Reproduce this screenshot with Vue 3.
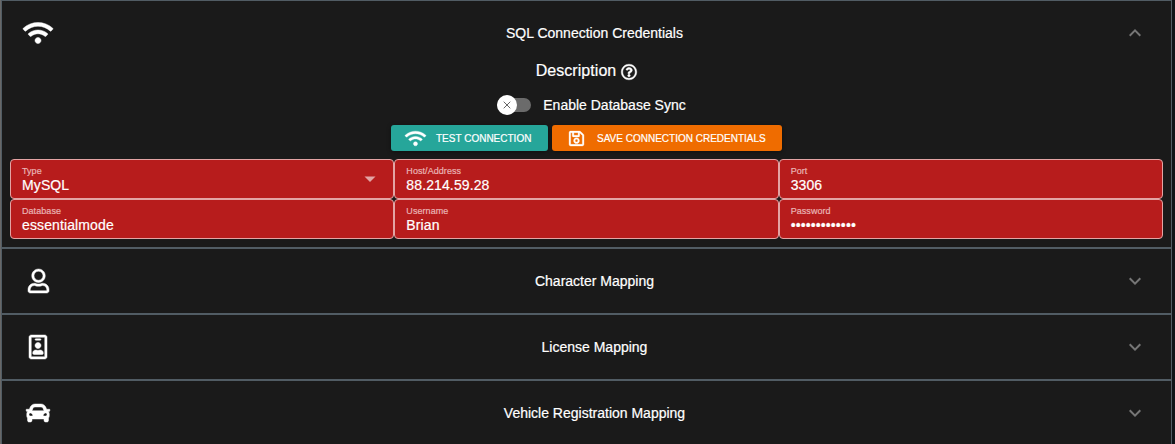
<script setup>
const wifi = {
  box: '0 0 640 512',
  d: 'M634.91 154.88C457.74-8.99 182.19-8.93 5.09 154.88c-6.66 6.16-6.79 16.59-.35 22.98l34.24 33.97c6.14 6.1 16.02 6.23 22.4.38 145.92-133.68 371.3-133.71 517.25 0 6.38 5.85 16.26 5.71 22.4-.38l34.24-33.97c6.43-6.39 6.3-16.82-.36-22.98zM320 352c-35.35 0-64 28.65-64 64s28.65 64 64 64 64-28.65 64-64-28.65-64-64-64zm202.67-83.59c-115.26-101.93-290.21-101.82-405.34 0-6.9 6.1-7.12 16.69-.57 23.15l34.44 33.99c6 5.92 15.66 6.32 22.05.8 83.95-72.57 209.74-72.41 293.49 0 6.39 5.52 16.05 5.13 22.05-.8l34.44-33.99c6.56-6.46 6.33-17.06-.56-23.15z',
}
const save =
  'M433.941 129.941l-83.882-83.882A48 48 0 0 0 316.118 32H48C21.49 32 0 53.49 0 80v352c0 26.51 21.49 48 48 48h352c26.51 0 48-21.49 48-48V163.882a48 48 0 0 0-14.059-33.941zM272 80v80H144V80h128zm122 352H54a6 6 0 0 1-6-6V86a6 6 0 0 1 6-6h42v104c0 13.255 10.745 24 24 24h176c13.255 0 24-10.745 24-24V83.882l78.243 78.243a6 6 0 0 1 1.757 4.243V426a6 6 0 0 1-6 6zM224 232c-48.523 0-88 39.477-88 88s39.477 88 88 88 88-39.477 88-88-39.477-88-88-88zm0 128c-22.056 0-40-17.944-40-40s17.944-40 40-40 40 17.944 40 40-17.944 40-40 40z'
const help =
  'M256 8C119.043 8 8 119.083 8 256c0 136.997 111.043 248 248 248s248-111.003 248-248C504 119.083 392.957 8 256 8zm0 448c-110.532 0-200-89.431-200-200 0-110.495 89.472-200 200-200 110.491 0 200 89.471 200 200 0 110.53-89.431 200-200 200zm107.244-255.2c0 67.052-72.421 68.084-72.421 92.863V300c0 6.627-5.373 12-12 12h-45.647c-6.627 0-12-5.373-12-12v-8.659c0-35.745 27.1-50.034 47.579-61.516 17.561-9.845 28.324-16.541 28.324-29.579 0-17.246-21.999-28.693-39.784-28.693-23.189 0-33.894 10.977-48.942 29.969-4.057 5.12-11.46 6.071-16.666 2.124l-27.824-21.098c-5.107-3.872-6.251-11.066-2.644-16.363C184.846 131.491 214.94 112 261.794 112c49.071 0 101.45 38.304 101.45 88.8zM298 368c0 23.159-18.841 42-42 42s-42-18.841-42-42 18.841-42 42-42 42 18.841 42 42z'
const chevron = 'M16.59 8.59L12 13.17 7.41 8.59 6 10l6 6 6-6z'

const fields = [
  { label: 'Type', value: 'MySQL', select: true },
  { label: 'Host/Address', value: '88.214.59.28' },
  { label: 'Port', value: '3306' },
  { label: 'Database', value: 'essentialmode' },
  { label: 'Username', value: 'Brian' },
  { label: 'Password', value: '•'.repeat(13), secret: true },
]

const sections = [
  {
    title: 'Character Mapping',
    box: '0 0 448 512',
    d: 'M313.6 304c-28.7 0-42.5 16-89.6 16-47.1 0-60.8-16-89.6-16C60.2 304 0 364.2 0 438.4V464c0 26.5 21.5 48 48 48h352c26.5 0 48-21.5 48-48v-25.6c0-74.2-60.2-134.4-134.4-134.4zM400 464H48v-25.6c0-47.6 38.8-86.4 86.4-86.4 14.6 0 38.3 16 89.6 16 51.7 0 74.9-16 89.6-16 47.6 0 86.4 38.8 86.4 86.4V464zM224 288c79.5 0 144-64.5 144-144S303.5 0 224 0 80 64.5 80 144s64.5 144 144 144zm0-240c52.9 0 96 43.1 96 96s-43.1 96-96 96-96-43.1-96-96 43.1-96 96-96z',
  },
  {
    title: 'License Mapping',
    box: '0 0 384 512',
    d: 'M336 0H48C21.5 0 0 21.5 0 48v416c0 26.5 21.5 48 48 48h288c26.5 0 48-21.5 48-48V48c0-26.5-21.5-48-48-48zm0 464H48V48h288v416zM144 112h96c8.8 0 16-7.2 16-16s-7.2-16-16-16h-96c-8.8 0-16 7.2-16 16s7.2 16 16 16zm48 176c35.3 0 64-28.7 64-64s-28.7-64-64-64-64 28.7-64 64 28.7 64 64 64zm-89.6 128h179.2c12.4 0 22.4-8.6 22.4-19.2v-19.2c0-31.8-30.1-57.6-67.2-57.6-10.8 0-18.7 8-44.8 8-26.9 0-33.4-8-44.8-8-37.1 0-67.2 25.8-67.2 57.6v19.2c0 10.6 10 19.2 22.4 19.2z',
  },
  {
    title: 'Vehicle Registration Mapping',
    box: '0 0 512 512',
    d: 'M499.99 176h-59.87l-16.64-41.6C406.38 91.63 365.57 64 319.5 64h-127c-46.06 0-86.88 27.63-103.99 70.4L71.87 176H12.01C4.2 176-1.53 183.34.37 190.91l6 24C7.7 220.25 12.5 224 18.01 224h20.07C24.65 235.73 16 252.78 16 272v48c0 16.12 6.16 30.67 16 41.93V416c0 17.67 14.33 32 32 32h32c17.67 0 32-14.33 32-32v-32h256v32c0 17.67 14.33 32 32 32h32c17.67 0 32-14.33 32-32v-54.07c9.84-11.25 16-25.8 16-41.93v-48c0-19.22-8.65-36.27-22.07-48H494c5.51 0 10.31-3.75 11.64-9.09l6-24c1.89-7.57-3.84-14.91-11.65-14.91zm-352.06-17.83c7.29-18.22 24.94-30.17 44.57-30.17h127c19.63 0 37.28 11.95 44.57 30.17L384 208H128l19.93-49.83zM96 319.8c-19.2 0-32-12.76-32-31.9S76.8 256 96 256s48 28.71 48 47.85-28.8 15.95-48 15.95zm320 0c-19.2 0-48 3.19-48-15.95S396.8 256 416 256s32 12.76 32 31.9-12.8 31.9-32 31.9z',
  },
]
</script>

<template>
  <div class="page">
    <div class="list">
      <section class="item open">
        <header class="head">
          <span class="lead"><svg class="icon" :viewBox="wifi.box"><path :d="wifi.d" /></svg></span>
          <span class="title">SQL Connection Credentials</span>
          <svg class="chev up" viewBox="0 0 24 24"><path :d="chevron" /></svg>
        </header>
        <div class="desc">
          <span>Description</span>
          <svg class="help" viewBox="0 0 512 512"><path :d="help" /></svg>
        </div>
        <div class="sync">
          <span class="track">
            <span class="thumb">
              <svg viewBox="0 0 8 8"><path d="M.7 .7L7.3 7.3M7.3 .7L.7 7.3" /></svg>
            </span>
          </span>
          <span>Enable Database Sync</span>
        </div>
        <div class="actions">
          <button class="btn teal">
            <svg class="wifi" :viewBox="wifi.box"><path :d="wifi.d" /></svg>
            <span>TEST CONNECTION</span>
          </button>
          <button class="btn orange">
            <svg class="disk" viewBox="0 0 448 512"><path :d="save" /></svg>
            <span>SAVE CONNECTION CREDENTIALS</span>
          </button>
        </div>
        <div class="fields">
          <div v-for="f in fields" :key="f.label" class="field">
            <div class="text">
              <span class="label">{{ f.label }}</span>
              <span class="value" :class="{ secret: f.secret }">{{ f.value }}</span>
            </div>
            <svg v-if="f.select" class="arrow" viewBox="0 0 24 24"><path d="M6.5 9.5l5.5 5.5 5.5-5.5z" /></svg>
          </div>
        </div>
      </section>
      <section v-for="s in sections" :key="s.title" class="item">
        <header class="head">
          <span class="lead"><svg class="icon" :viewBox="s.box"><path :d="s.d" /></svg></span>
          <span class="title">{{ s.title }}</span>
          <svg class="chev" viewBox="0 0 24 24"><path :d="chevron" /></svg>
        </header>
      </section>
    </div>
  </div>
</template>

<style>
body {
  background: #0f1418;
  overflow: hidden;
}
</style>

<style scoped>
.page {
  box-sizing: border-box;
  height: 444px;
  overflow: hidden;
  border-left: 1px solid #686868;
  padding-right: 3px;
  color: #fff;
  font-family: "Liberation Sans", Arial, sans-serif;
  font-size: 14px;
  -webkit-text-stroke: 0.2px currentColor;
}
.item {
  box-sizing: border-box;
  height: 66px;
  border: 1px solid #515c64;
  background: #1a1a1a;
}
.item.open {
  height: 248px;
}
.head {
  display: grid;
  grid-template-columns: 56px 1fr 56px;
  align-items: center;
  height: 64px;
  padding: 0 8px;
}
.lead {
  display: flex;
  justify-content: center;
}
.icon {
  height: 24px;
  width: auto;
  fill: #fff;
  stroke: #fff;
  stroke-width: 10;
  overflow: visible;
}
.title {
  text-align: center;
  line-height: 20px;
  padding-left: 16px;
}
.chev {
  width: 24px;
  height: 24px;
  fill: #767676;
  justify-self: center;
}
.chev.up {
  transform: rotate(180deg);
}
.desc {
  display: flex;
  justify-content: center;
  align-items: center;
  gap: 5px;
  height: 12px;
  font-size: 16px;
  letter-spacing: 0.06px;
}
.help {
  width: 16px;
  height: 16px;
  margin-top: 2px;
  fill: #fff;
  stroke: #fff;
  stroke-width: 14;
  overflow: visible;
}
.sync {
  display: flex;
  align-items: center;
  justify-content: center;
  gap: 12px;
  height: 20px;
  margin-top: 18px;
  padding-left: 10px;
}
.track {
  display: flex;
  align-items: center;
  width: 34px;
  height: 14px;
  border-radius: 7px;
  background: #6b6b6b;
}
.thumb {
  display: flex;
  align-items: center;
  justify-content: center;
  flex: none;
  width: 20px;
  height: 20px;
  border-radius: 50%;
  background: #fff;
}
.thumb svg {
  width: 8px;
  height: 8px;
  stroke: #666;
  stroke-width: 1;
}
.actions {
  display: flex;
  justify-content: center;
  gap: 4px;
  margin-top: 10px;
}
.btn {
  display: flex;
  align-items: center;
  box-sizing: border-box;
  height: 26px;
  border: 0;
  border-radius: 3px;
  padding: 0 0 0 14px;
  color: #fff;
  font: 10px "Liberation Sans", Arial, sans-serif;
  white-space: nowrap;
  box-shadow: 0 1px 4px rgba(0, 0, 0, 0.4);
}
.btn svg {
  fill: #fff;
  stroke: #fff;
  stroke-width: 10;
  overflow: visible;
}
.teal {
  width: 157px;
  background: #26a69a;
}
.orange {
  width: 230px;
  background: #ef6c00;
  padding-left: 17px;
}
.wifi {
  width: 21px;
  height: 17px;
  margin-right: 10px;
}
.disk {
  width: 15px;
  height: 17px;
  margin-right: 13px;
}
.fields {
  display: grid;
  grid-template-columns: repeat(3, 1fr);
  margin: 8px 8px 0;
}
.field {
  display: flex;
  align-items: center;
  justify-content: space-between;
  box-sizing: border-box;
  height: 40px;
  border: 1px solid #e3a4a4;
  border-radius: 4px;
  background: #b71c1c;
  padding: 0 11px;
}
.text {
  display: flex;
  flex-direction: column;
}
.label {
  font-size: 9px;
  line-height: 12px;
  letter-spacing: 0.06px;
  color: #e9b4b4;
}
.value {
  line-height: 17px;
  letter-spacing: 0.12px;
}
.secret {
  letter-spacing: 0.12px;
}
.arrow {
  width: 24px;
  height: 24px;
  fill: #e3a4a4;
}
</style>
